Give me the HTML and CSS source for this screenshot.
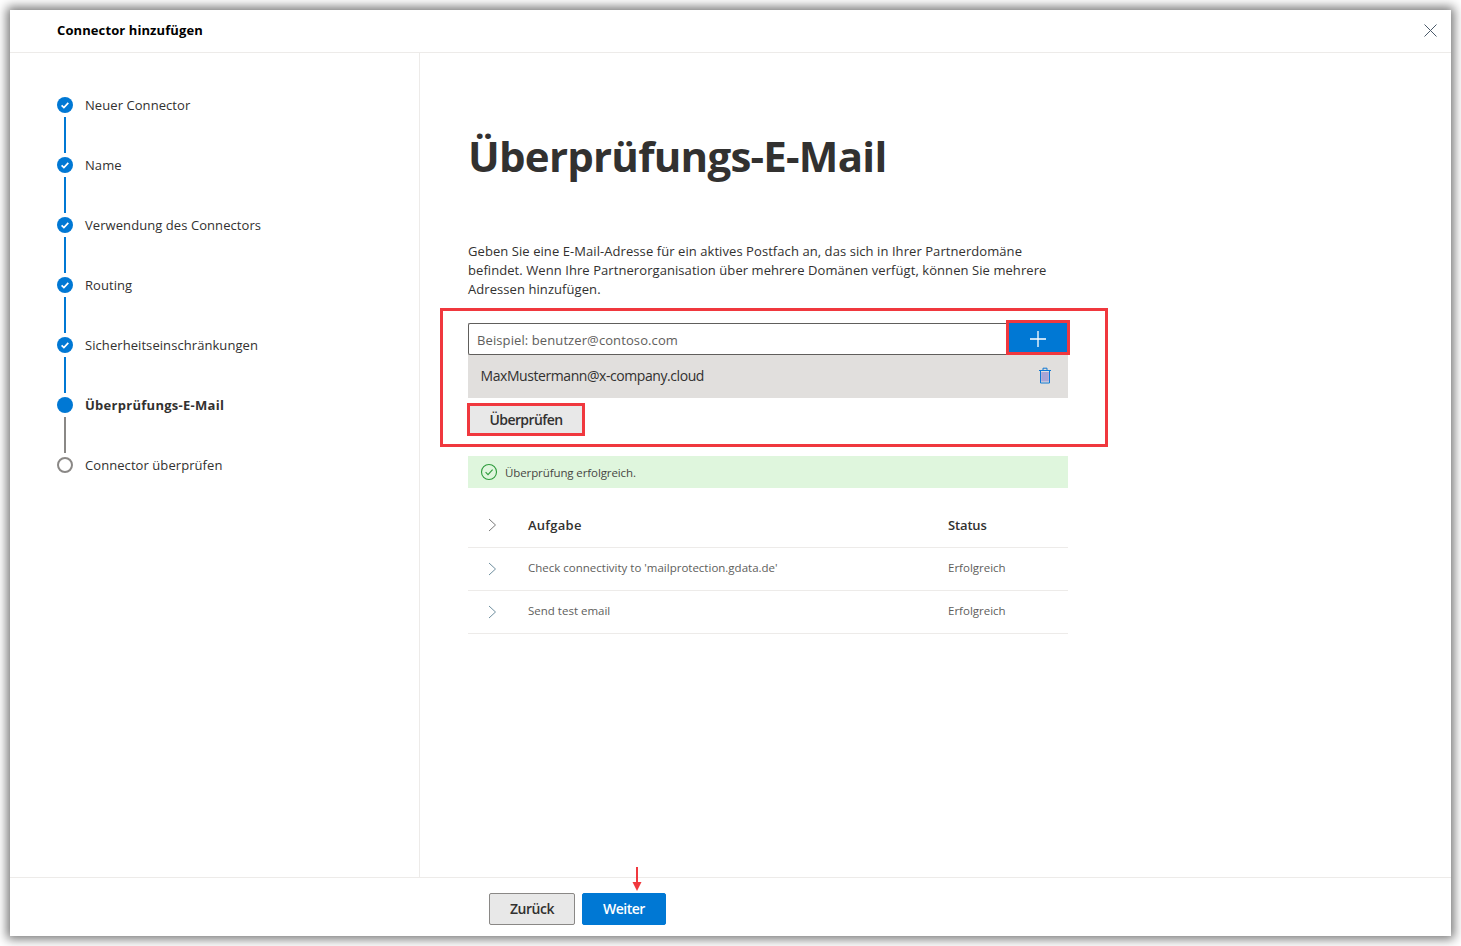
FILE: index.html
```html
<!DOCTYPE html>
<html lang="de">
<head>
<meta charset="utf-8">
<title>Connector hinzufügen</title>
<link rel="stylesheet" href="styles.css">
</head>
<body>
<div class="modal">
  <header class="head">
    <h2 class="head-title">Connector hinzufügen</h2>
    <svg class="close" width="13" height="13" viewBox="0 0 13 13"><path d="M.5.5l12 12M12.5.5l-12 12" stroke="#4a5a6a" stroke-width="1" fill="none"/></svg>
  </header>
  <div class="middle">
    <nav class="steps">
      <div class="step done"><span class="dot"><svg width="16" height="16" viewBox="0 0 16 16"><path d="M4.6 8.3l2.3 2.2 4.4-4.6" stroke="#fff" stroke-width="1.7" fill="none"/></svg></span><span class="label">Neuer Connector</span></div>
      <div class="step done"><span class="dot"><svg width="16" height="16" viewBox="0 0 16 16"><path d="M4.6 8.3l2.3 2.2 4.4-4.6" stroke="#fff" stroke-width="1.7" fill="none"/></svg></span><span class="label">Name</span></div>
      <div class="step done"><span class="dot"><svg width="16" height="16" viewBox="0 0 16 16"><path d="M4.6 8.3l2.3 2.2 4.4-4.6" stroke="#fff" stroke-width="1.7" fill="none"/></svg></span><span class="label">Verwendung des Connectors</span></div>
      <div class="step done"><span class="dot"><svg width="16" height="16" viewBox="0 0 16 16"><path d="M4.6 8.3l2.3 2.2 4.4-4.6" stroke="#fff" stroke-width="1.7" fill="none"/></svg></span><span class="label">Routing</span></div>
      <div class="step done"><span class="dot"><svg width="16" height="16" viewBox="0 0 16 16"><path d="M4.6 8.3l2.3 2.2 4.4-4.6" stroke="#fff" stroke-width="1.7" fill="none"/></svg></span><span class="label">Sicherheitseinschränkungen</span></div>
      <div class="step current"><span class="dot"></span><span class="label">Überprüfungs-E-Mail</span></div>
      <div class="step todo"><span class="dot"></span><span class="label">Connector überprüfen</span></div>
    </nav>
    <main class="content">
      <h1 class="title">Überprüfungs-E-Mail</h1>
      <p class="intro">Geben Sie eine E-Mail-Adresse für ein aktives Postfach an, das sich in Ihrer Partnerdomäne<br>befindet. Wenn Ihre Partnerorganisation über mehrere Domänen verfügt, können Sie mehrere<br>Adressen hinzufügen.</p>
      <section class="mark-box">
        <div class="input-row">
          <div class="input">Beispiel: benutzer@contoso.com</div>
          <button class="add" type="button"><svg width="16" height="16" viewBox="0 0 16 16"><path d="M8 0v16M0 8h16" stroke="#fff" stroke-width="1.3" fill="none"/></svg></button>
        </div>
        <div class="mail-row">
          <span>MaxMustermann@x-company.cloud</span>
          <svg class="trash" width="14" height="17" viewBox="0 0 14 17"><rect x="3.2" y="5" width="7.6" height="9.5" fill="#a9a5d6"/><path d="M1 3.5h12M2.5 3.5v12.5h9V3.5M5 3.5V1.2h4v2.3" stroke="#0f78d4" stroke-width="1" fill="none"/></svg>
        </div>
        <button class="check" type="button">Überprüfen</button>
      </section>
      <div class="success">
        <svg width="18" height="18" viewBox="0 0 18 18"><circle cx="9" cy="9" r="7.5" stroke="#2e9b3c" stroke-width="1.1" fill="none"/><path d="M5.6 9.2l2.4 2.4 4.6-5" stroke="#2e9b3c" stroke-width="1.1" fill="none"/></svg>
        <span>Überprüfung erfolgreich.</span>
      </div>
      <div class="table">
        <div class="row row-head">
          <svg class="chev" width="9" height="14" viewBox="0 0 9 14"><path d="M1 1l6.5 6L1 13" stroke="#7a7a7a" stroke-width="1" fill="none"/></svg>
          <span class="task">Aufgabe</span><span class="status">Status</span>
        </div>
        <div class="row">
          <svg class="chev" width="9" height="14" viewBox="0 0 9 14"><path d="M1 1l6.5 6L1 13" stroke="#6f8f9f" stroke-width="1" fill="none"/></svg>
          <span class="task">Check connectivity to 'mailprotection.gdata.de'</span><span class="status">Erfolgreich</span>
        </div>
        <div class="row">
          <svg class="chev" width="9" height="14" viewBox="0 0 9 14"><path d="M1 1l6.5 6L1 13" stroke="#6f8f9f" stroke-width="1" fill="none"/></svg>
          <span class="task">Send test email</span><span class="status">Erfolgreich</span>
        </div>
      </div>
    </main>
  </div>
  <footer class="foot">
    <button class="btn back" type="button">Zurück</button>
    <button class="btn next" type="button">Weiter
      <svg class="arrow" width="10" height="26" viewBox="0 0 10 26"><path d="M5 0v18" stroke="#f0383e" stroke-width="2" fill="none"/><path d="M.5 15h9L5 24z" fill="#f0383e"/></svg>
    </button>
  </footer>
</div>
</body>
</html>
```
FILE: styles.css
```css
* { box-sizing: border-box; }
html, body { margin: 0; height: 100%; }
body {
  background: #fff;
  padding: 10px;
  font-family: "Open Sans", "Noto Sans", sans-serif;
  color: #323130;
  overflow: hidden;
}
.modal {
  width: 1441px;
  height: 926px;
  background: #fff;
  box-shadow: 0 0 10px 3px rgba(0,0,0,.55);
  display: flex;
  flex-direction: column;
}
.head {
  height: 43px;
  flex: none;
  border-bottom: 1px solid #edebe9;
  display: flex;
  align-items: center;
  justify-content: space-between;
  padding: 0 14px 2px 47px;
}
.head-title { margin: 0; font-size: 13px; font-weight: 700; color: #000; letter-spacing: .1px; }
.close { display: block; }
.middle { flex: 1; display: flex; min-height: 0; }
.steps {
  width: 410px;
  flex: none;
  border-right: 1px solid #edebe9;
  padding: 22px 0 0 47px;
}
.step {
  height: 60px;
  display: flex;
  align-items: center;
  gap: 12px;
  position: relative;
  font-size: 13px;
  letter-spacing: .07px;
}
.step:not(:last-child)::after {
  content: "";
  position: absolute;
  left: 7px;
  top: 42px;
  width: 2px;
  height: 36px;
  background: #0078d4;
}
.step.current::after { background: #8a8886; }
.dot { width: 16px; height: 16px; border-radius: 50%; flex: none; display: block; }
.dot svg { display: block; }
.done .dot, .current .dot { background: #0078d4; }
.todo .dot { border: 2px solid #8a8886; background: #fff; }
.current .label { font-weight: 700; letter-spacing: .28px; }
.content { flex: 1; padding: 0 0 0 48px; min-width: 0; }
.title {
  margin: 71px 0 0;
  font-size: 42px;
  line-height: 64px;
  font-weight: 700;
  letter-spacing: -.75px;
  color: #323130;
}
.intro {
  margin: 54px 0 0;
  font-size: 13px;
  line-height: 19px;
  letter-spacing: .07px;
  color: #323130;
}
.mark-box {
  margin: 9px 0 0 -28px;
  width: 668px;
  height: 139px;
  border: 3px solid #f0383e;
  padding: 12px 0 0 25px;
}
.input-row { width: 600px; height: 32px; display: flex; }
.input {
  width: 538px;
  height: 32px;
  border: 1px solid #605e5c;
  border-right: 0;
  border-radius: 2px 0 0 2px;
  padding: 0 8px;
  font-size: 13px;
  line-height: 32px;
  letter-spacing: .1px;
  color: #605e5c;
}
.add {
  width: 58px;
  height: 29px;
  margin-left: 3px;
  border: 0;
  padding: 2px 0 0;
  background: #0078d4;
  outline: 3px solid #f0383e;
  display: flex;
  align-items: center;
  justify-content: center;
}
.mail-row {
  width: 600px;
  height: 43px;
  background: #e1dfdd;
  display: flex;
  align-items: center;
  justify-content: space-between;
  padding: 0 16px 2px 12.5px;
  font-size: 14px;
  letter-spacing: -.43px;
}
.check {
  display: block;
  margin: 8px 0 0 2px;
  width: 112px;
  height: 27px;
  border: 0;
  background: #e8e8e8;
  outline: 3px solid #f0383e;
  font: 600 14px "Open Sans", sans-serif;
  color: #323130;
  letter-spacing: -.6px;
  padding: 0;
}
.success {
  margin-top: 9px;
  width: 600px;
  height: 32px;
  background: #dff6dd;
  display: flex;
  align-items: center;
  gap: 7px;
  padding-left: 12px;
  font-size: 11.5px;
  letter-spacing: -.1px;
  color: #484644;
}
.success svg { display: block; }
.table { margin-top: 15px; width: 600px; }
.row {
  height: 43px;
  border-bottom: 1px solid #edebe9;
  display: flex;
  align-items: center;
  font-size: 11.5px;
  color: #605e5c;
}
.row .task, .row .status { padding-bottom: 4px; }
.row-head { height: 45px; font-size: 13px; font-weight: 600; color: #323130; letter-spacing: -.15px; }
.row-head .task { letter-spacing: .25px; padding-bottom: 0; }
.row-head .status { padding-bottom: 0; }
.chev { margin-left: 20px; flex: none; display: block; }
.task { margin-left: 31px; width: 420px; flex: none; }
.foot {
  height: 59px;
  flex: none;
  border-top: 1px solid #edebe9;
  display: flex;
  align-items: flex-start;
  gap: 7px;
  padding: 15px 0 0 479px;
}
.btn {
  height: 32px;
  font: 600 14px "Open Sans", sans-serif;
  letter-spacing: -.5px;
  border-radius: 2px;
  padding: 0 0 2px;
}
.back { width: 86px; background: #e8e8e8; border: 1px solid #8a8886; color: #323130; }
.next { width: 84px; background: #0078d4; border: 1px solid #0078d4; color: #fff; position: relative; }
.arrow { position: absolute; left: 49px; top: -27px; display: block; }
```
